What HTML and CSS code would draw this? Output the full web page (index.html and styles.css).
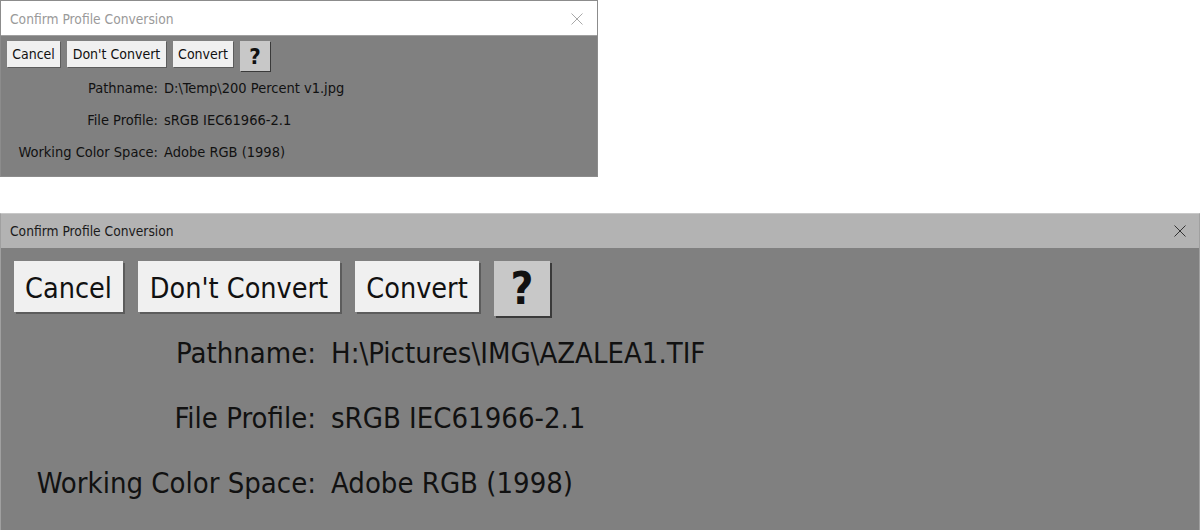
FILE: index.html
```html
<!DOCTYPE html>
<html>
<head>
<meta charset="utf-8">
<link rel="stylesheet" href="styles.css">
</head>
<body>
<div class="page">
  <div class="dlg dlg-small">
    <div class="titlebar">
      <span class="title">Confirm Profile Conversion</span>
      <svg class="close" viewBox="0 0 12 12"><path d="M0.5 0.5 L11.5 11.5 M11.5 0.5 L0.5 11.5"/></svg>
    </div>
    <div class="body">
      <div class="buttons">
        <div class="btn b-cancel">Cancel</div>
        <div class="btn b-dont">Don't Convert</div>
        <div class="btn b-convert">Convert</div>
        <div class="btn help">?</div>
      </div>
      <div class="rows">
        <div class="lbl">Pathname:</div><div class="val">D:\Temp\200 Percent v1.jpg</div>
        <div class="lbl">File Profile:</div><div class="val">sRGB IEC61966-2.1</div>
        <div class="lbl">Working Color Space:</div><div class="val">Adobe RGB (1998)</div>
      </div>
    </div>
  </div>
  <div class="dlg dlg-large">
    <div class="titlebar">
      <span class="title">Confirm Profile Conversion</span>
      <svg class="close" viewBox="0 0 12 12"><path d="M0.5 0.5 L11.5 11.5 M11.5 0.5 L0.5 11.5"/></svg>
    </div>
    <div class="body">
      <div class="buttons">
        <div class="btn b-cancel">Cancel</div>
        <div class="btn b-dont">Don't Convert</div>
        <div class="btn b-convert">Convert</div>
        <div class="btn help">?</div>
      </div>
      <div class="rows">
        <div class="lbl">Pathname:</div><div class="val">H:\Pictures\IMG\AZALEA1.TIF</div>
        <div class="lbl">File Profile:</div><div class="val">sRGB IEC61966-2.1</div>
        <div class="lbl">Working Color Space:</div><div class="val">Adobe RGB (1998)</div>
      </div>
    </div>
  </div>
</div>
</body>
</html>
```

FILE: styles.css
```css
* { box-sizing: border-box; }
html, body { margin: 0; padding: 0; background: #ffffff; }
body {
  font-family: "DejaVu Sans Condensed", "DejaVu Sans", sans-serif;
  color: #111;
  width: 1200px;
  height: 530px;
  overflow: hidden;
}
.page { display: flex; flex-direction: column; }

.dlg { display: flex; flex-direction: column; }
.titlebar {
  display: flex;
  align-items: center;
  justify-content: space-between;
  height: 34px;
  padding: 0 14px 0 9px;
}
.title { font-size: 13.7px; }
.close { width: 12px; height: 12px; }
.close path { fill: none; stroke-width: 1; }
.body { background: #808080; display: flex; flex-direction: column; flex: 1; }
.buttons { display: flex; align-items: flex-start; }
.btn {
  background: #f0f0f0;
  display: flex;
  align-items: center;
  justify-content: center;
  box-shadow: 1px 1px 0 #5c5c5c;
}
.btn.help { background: #c8c8c8; font-weight: bold; box-shadow: 1px 1px 0 #3a3a3a; }
.rows { display: grid; align-items: center; }
.lbl { text-align: right; white-space: nowrap; }
.val { white-space: nowrap; }

/* small dialog */
.dlg-small {
  width: 598px;
  height: 177px;
  border: 1px solid #8c8c8c;
  margin-bottom: 36px;
}
.dlg-small .titlebar { background: #ffffff; border-bottom: 1px solid #a0a0a0; height: 35px; padding-top: 2px; }
.dlg-small .title { color: #9a9a9a; }
.dlg-small .close path { stroke: #a8a8a8; }
.dlg-small .body { padding: 5px 6px 0 6px; }
.dlg-small .buttons { gap: 7px; }
.dlg-small .btn { height: 26px; font-size: 14px; }
.dlg-small .b-cancel { width: 53px; }
.dlg-small .b-dont { width: 99px; }
.dlg-small .b-convert { width: 60px; }
.dlg-small .help { width: 30px; height: 30px; font-size: 22px; }
.dlg-small .rows {
  margin-left: -6px;
  margin-top: 1px;
  grid-template-columns: 157px auto;
  column-gap: 6px;
  grid-auto-rows: 32px;
  font-size: 14.5px;
}

/* large dialog */
.dlg-large {
  width: 1200px;
  height: 317px;
  border-top: 1px solid #c8c8c8;
  border-left: 1px solid #a0a0a0;
  border-right: 1px solid #a0a0a0;
}
.dlg-large .titlebar { background: #b3b3b3; padding-right: 13px; }
.dlg-large .title { color: #1a1a1a; }
.dlg-large .close path { stroke: #333; }
.dlg-large .body { padding: 13px 13px 0 13px; }
.dlg-large .buttons { gap: 15px; }
.dlg-large .btn { height: 51px; font-size: 28.5px; padding-top: 3px; box-shadow: 2px 2px 0 #5c5c5c; }
.dlg-large .b-cancel { width: 109px; }
.dlg-large .b-dont { width: 202px; }
.dlg-large .b-convert { width: 124px; }
.dlg-large .help { width: 56px; height: 55px; font-size: 44px; padding-top: 0; box-shadow: 2px 2px 0 #3a3a3a; }
.dlg-large .rows {
  margin-left: -13px;
  margin-top: 4px;
  grid-template-columns: 315px auto;
  column-gap: 15px;
  grid-auto-rows: 65px;
  font-size: 29px;
}
```
